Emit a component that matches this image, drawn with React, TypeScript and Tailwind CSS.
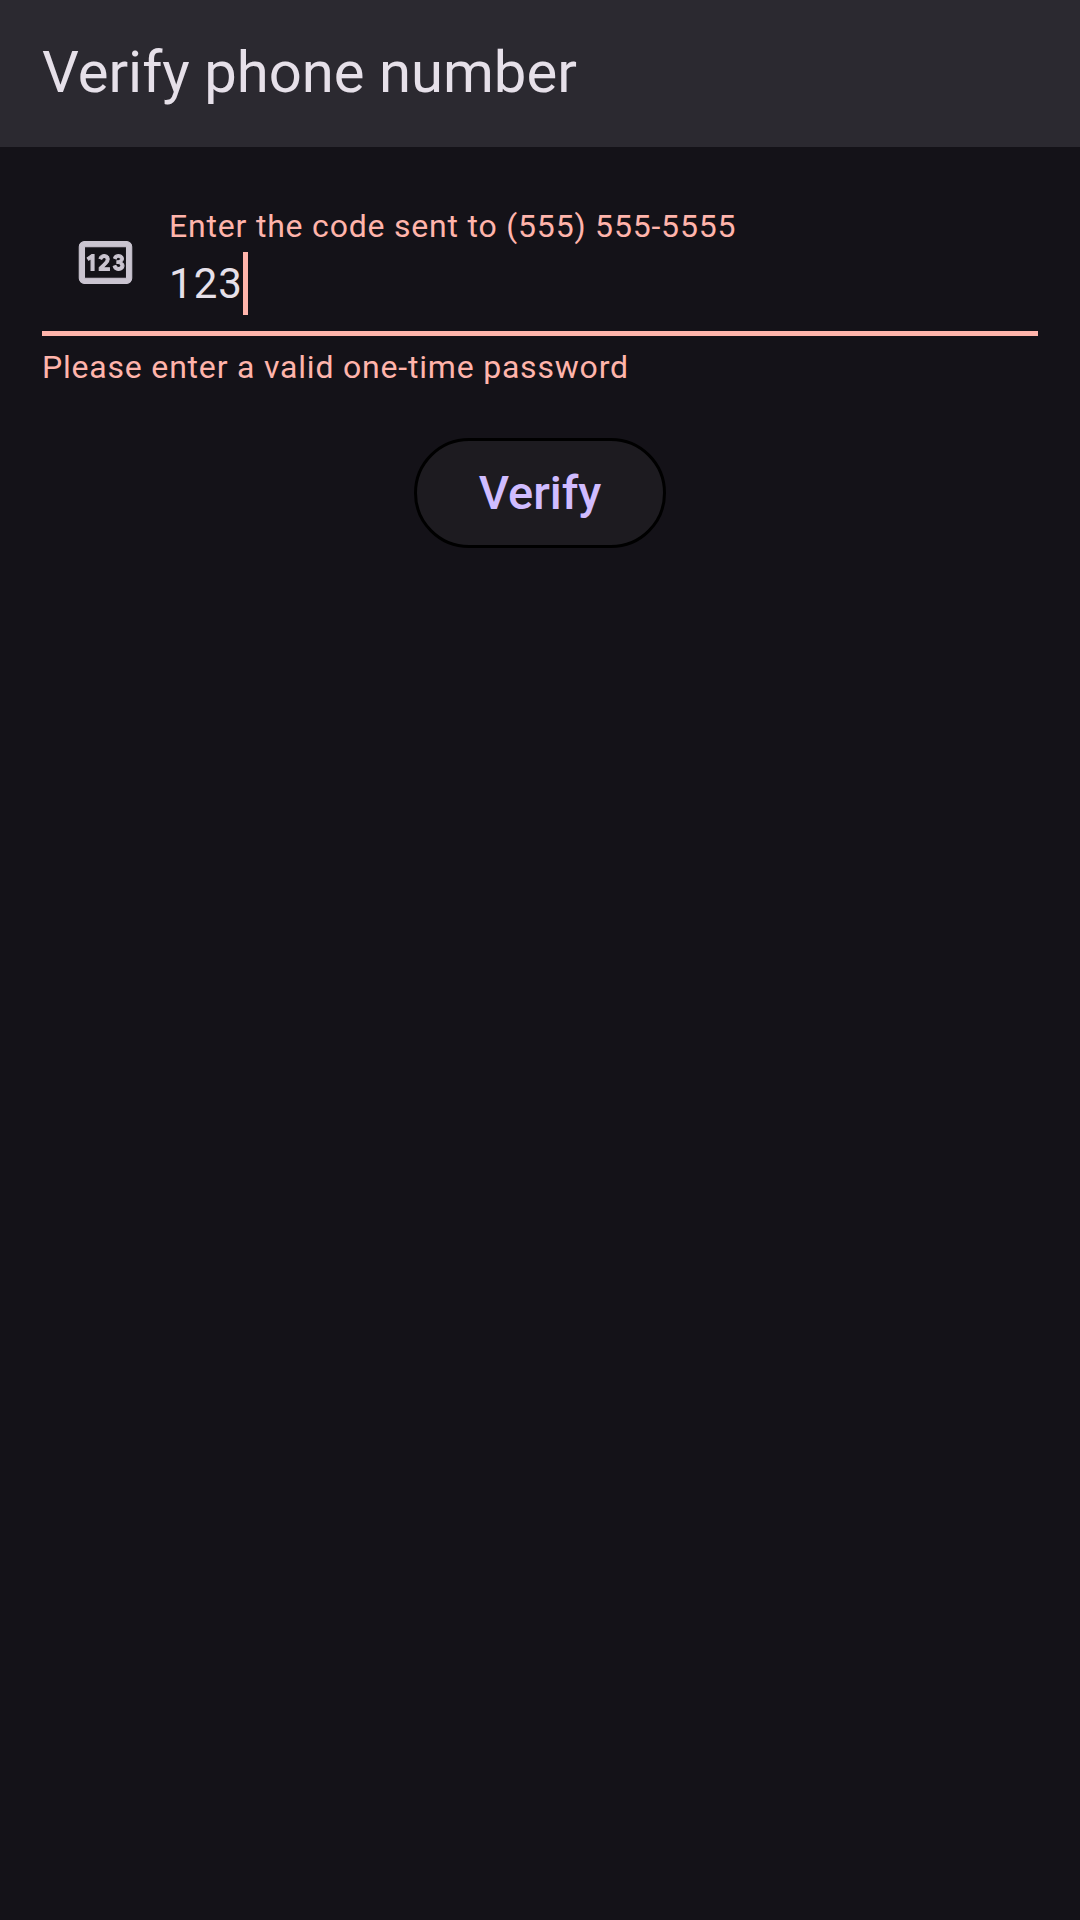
import { useState } from "react";
import { MdOutlinePin } from "react-icons/md";

export default function App() {
  const [code, setCode] = useState("123");
  return (
    <div className="flex min-h-screen flex-col bg-[#141218] font-[Roboto,sans-serif] text-[#e6e0e9]">
      <header className="flex h-[147px] items-center bg-[#2b2930] px-[42px] pb-1">
        <h1 className="text-[58px] leading-[68px]">Verify phone number</h1>
      </header>
      <main className="px-[42px] pt-[42px]">
        <form className="flex flex-col" onSubmit={(e) => e.preventDefault()}>
          <div className="flex h-[147px] items-center border-b-[5px] border-[#ffb4ab]">
            <MdOutlinePin
              className="mx-8 mt-1 size-[63px] shrink-0 stroke-current stroke-[0.4] text-[#cac4d0] [&>path:first-child]:stroke-none"
              aria-hidden="true"
            />
            <div className="flex grow flex-col pb-1.5">
              <label htmlFor="code" className="text-[32px] leading-[52px] tracking-wide text-[#ffb4ab]">
                Enter the code sent to (555) 555-5555
              </label>
              <div className="relative">
                <input
                  id="code"
                  inputMode="numeric"
                  value={code}
                  onChange={(e) => setCode(e.target.value)}
                  aria-invalid="true"
                  aria-describedby="code-error"
                  className="block h-[63px] w-full bg-transparent text-[42px] tracking-wide caret-transparent outline-none"
                />
                <span
                  aria-hidden="true"
                  className="pointer-events-none absolute inset-y-0 left-0 flex text-[42px] tracking-wide"
                >
                  <span className="invisible">{code}</span>
                  <span className="w-[5px] bg-[#ffb4ab]" />
                </span>
              </div>
            </div>
          </div>
          <p id="code-error" className="pt-3 text-[32px] leading-[38px] tracking-wide text-[#ffb4ab]">
            Please enter a valid one-time password
          </p>
          <button
            type="submit"
            className="mt-[52px] flex h-[110px] items-center self-center rounded-full border-[3px] border-black bg-[#1d1b20] px-[62px] text-[47px] font-medium text-[#d0bcff]"
          >
            Verify
          </button>
        </form>
      </main>
    </div>
  );
}
